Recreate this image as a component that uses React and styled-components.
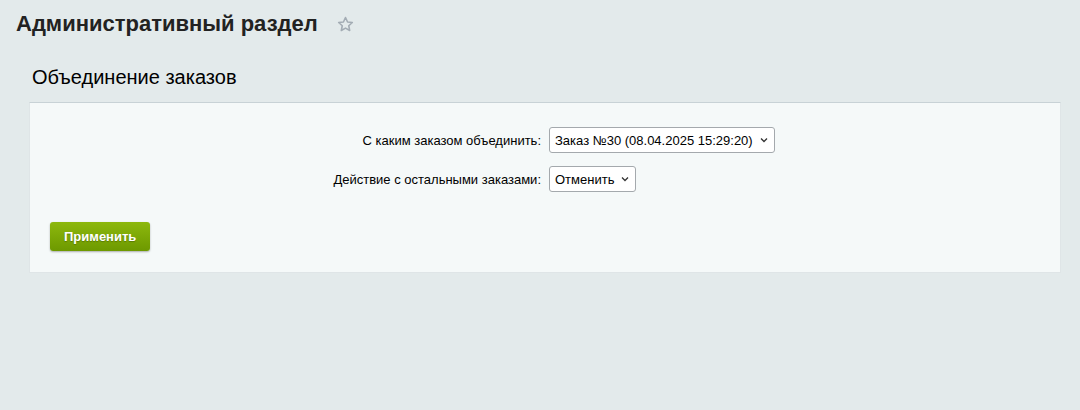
import React from 'react';
import styled, { createGlobalStyle } from 'styled-components';

const GlobalStyle = createGlobalStyle`
  html, body {
    margin: 0;
    padding: 0;
    background: #e3eaeb;
    font-family: "Liberation Sans", Arial, sans-serif;
    color: #000;
  }
`;

const Page = styled.div`
  min-height: 410px;
  padding: 10px 19px 0 16px;
  box-sizing: border-box;
`;

const TitleRow = styled.div`
  display: flex;
  align-items: center;
  gap: 18px;
  height: 28px;
`;

const Title = styled.h1`
  margin: 0;
  font-size: 22px;
  font-weight: bold;
  color: #222;
  line-height: 28px;
`;

const Star = styled.svg`
  width: 19px;
  height: 19px;
  margin-top: 1px;
`;

const SubTitle = styled.h2`
  margin: 28px 0 0 16px;
  font-size: 20px;
  font-weight: normal;
  color: #000;
  line-height: 23px;
`;

const Panel = styled.div`
  margin: 13px 0 0 13px;
  background: #f5f9f9;
  border: 1px solid #dfe5e7;
  border-top-color: #c8d2d6;
  padding: 24px 0 21px;
`;

const Form = styled.div`
  display: grid;
  grid-template-columns: 1fr 1fr;
  row-gap: 13px;
  align-items: center;
`;

const Label = styled.label`
  text-align: right;
  padding-right: 4px;
  font-size: 13px;
  color: #000;
`;

const Field = styled.div`
  padding-left: 4px;
`;

const Select = styled.div`
  display: inline-flex;
  align-items: center;
  justify-content: space-between;
  box-sizing: border-box;
  height: 26px;
  width: ${p => p.$width}px;
  padding: 0 6px 0 5px;
  background: #fff;
  border: 1px solid #a4a9ad;
  border-radius: 3px;
  font-size: 13px;
  color: #000;
`;

const Chevron = styled.svg`
  width: 8px;
  height: 6px;
  flex: none;
`;

const Actions = styled.div`
  padding: 30px 0 0 20px;
`;

const Button = styled.button`
  height: 29px;
  padding: 0 14px;
  border: none;
  border-radius: 3px;
  background: linear-gradient(to bottom, #8db80d, #6d9900);
  box-shadow: 0 1px 2px rgba(0, 0, 0, 0.3);
  color: #fff;
  font-family: "Liberation Sans", Arial, sans-serif;
  font-size: 13px;
  font-weight: bold;
  text-shadow: 0 1px 1px rgba(0, 0, 0, 0.25);
  cursor: pointer;
`;

function Dropdown({ width, children }) {
  return (
    <Select $width={width}>
      <span>{children}</span>
      <Chevron viewBox="0 0 8 6">
        <path d="M1 1.5 L4 4.5 L7 1.5" fill="none" stroke="#333" strokeWidth="1.3" />
      </Chevron>
    </Select>
  );
}

export default function App() {
  return (
    <>
      <GlobalStyle />
      <Page>
        <TitleRow>
          <Title>Административный раздел</Title>
          <Star viewBox="0 0 24 24">
            <path
              d="M12 3.2l2.6 5.6 6 .7-4.5 4.1 1.2 6-5.3-3-5.3 3 1.2-6-4.5-4.1 6-.7z"
              fill="none"
              stroke="#a3acb4"
              strokeWidth="2"
              strokeLinejoin="round"
            />
          </Star>
        </TitleRow>
        <SubTitle>Объединение заказов</SubTitle>
        <Panel>
          <Form>
            <Label>С каким заказом объединить:</Label>
            <Field>
              <Dropdown width={226}>Заказ №30 (08.04.2025 15:29:20)</Dropdown>
            </Field>
            <Label>Действие с остальными заказами:</Label>
            <Field>
              <Dropdown width={87}>Отменить</Dropdown>
            </Field>
          </Form>
          <Actions>
            <Button>Применить</Button>
          </Actions>
        </Panel>
      </Page>
    </>
  );
}
